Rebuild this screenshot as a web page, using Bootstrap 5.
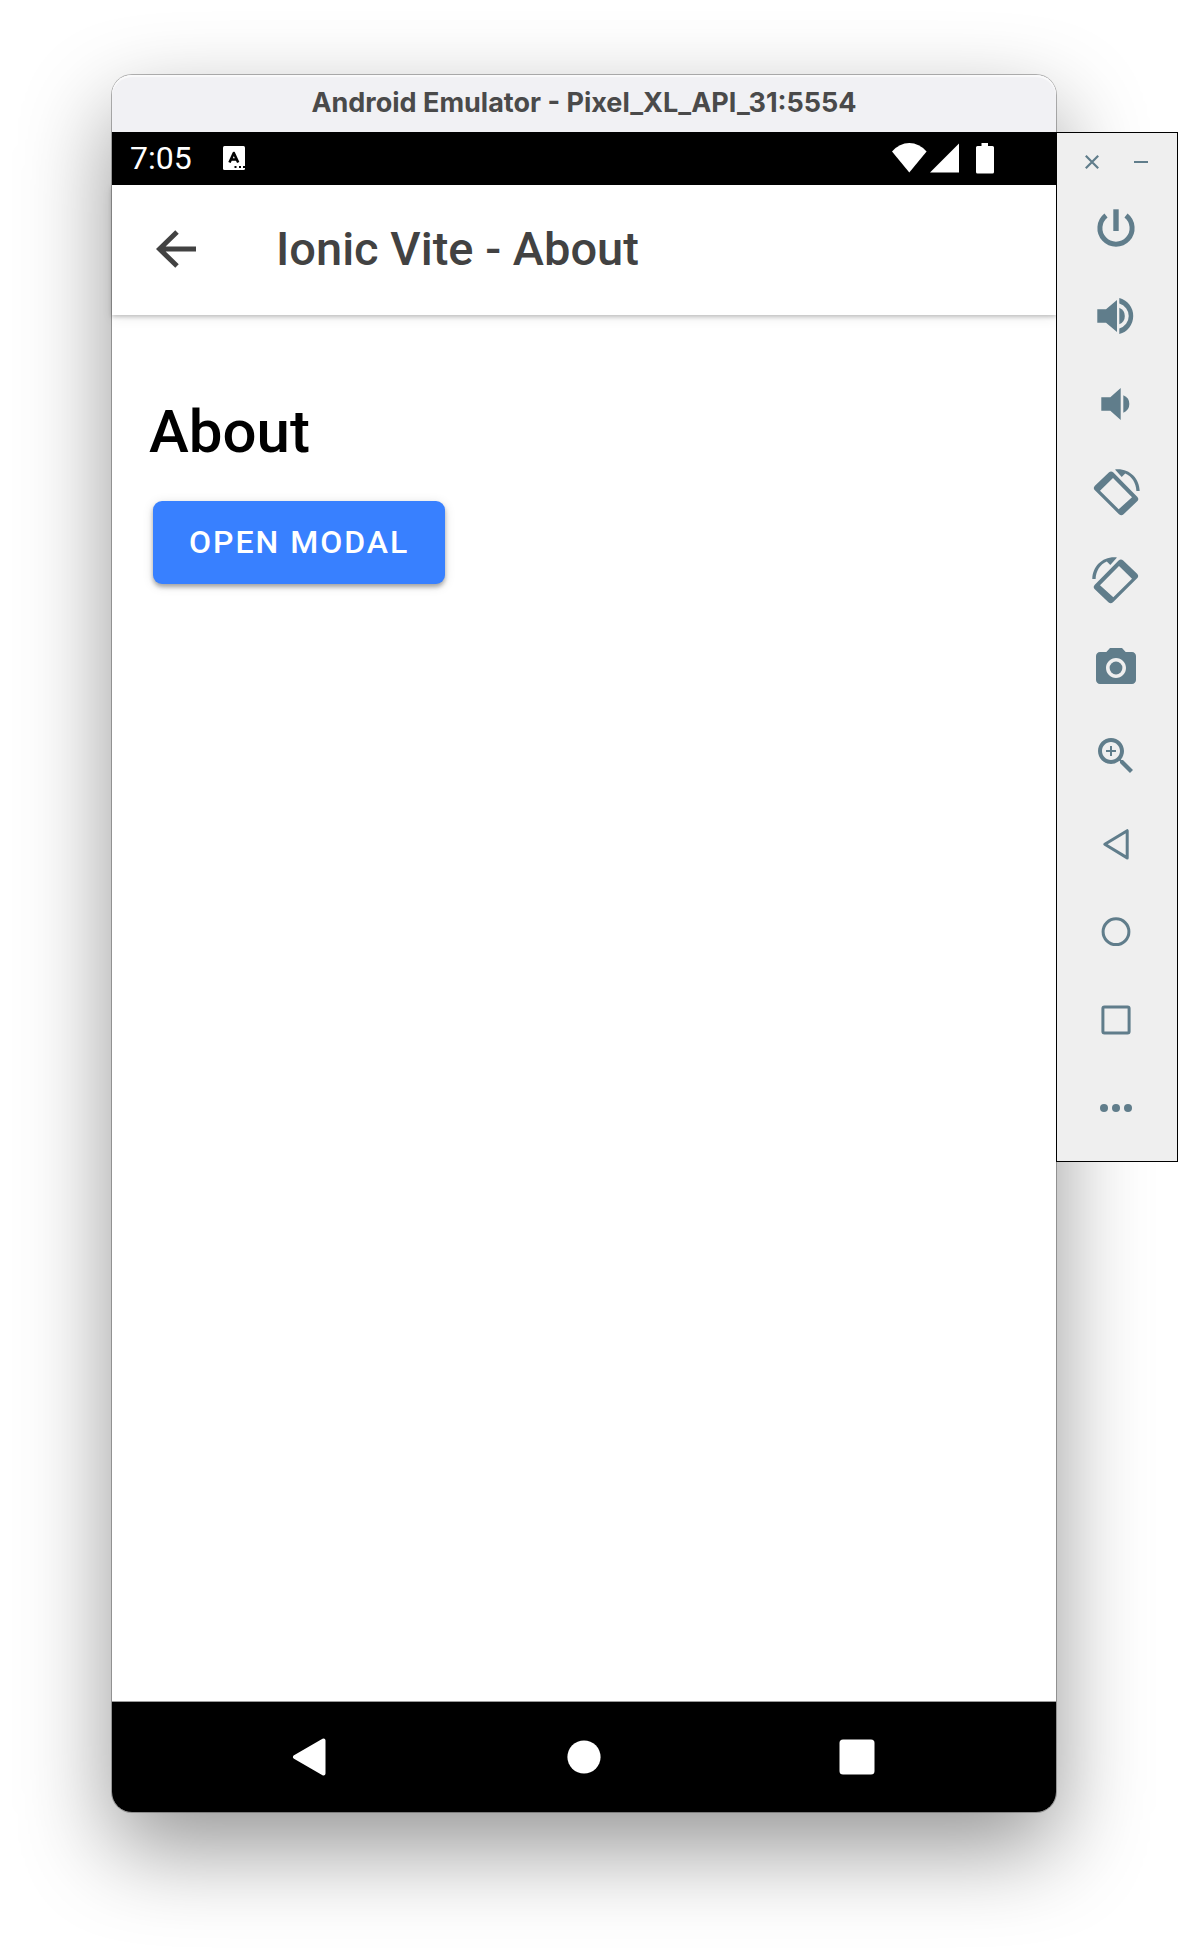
<!DOCTYPE html>
<html lang="en">
<head>
<meta charset="utf-8">
<meta name="viewport" content="width=device-width, initial-scale=1">
<title>Android Emulator - Pixel_XL_API_31:5554</title>
<link rel="stylesheet" href="https://cdn.jsdelivr.net/npm/bootstrap@5.3.0/dist/css/bootstrap.min.css">
<style>
  body { background: #fff; font-family: Roboto, sans-serif; }
  .desktop { padding: 75px 0 148px 112px; }
  .emulator {
    min-width: 0;
    border-radius: 20px;
    box-shadow: 0 0 0 1px rgba(0, 0, 0, .28), 0 36px 90px rgba(0, 0, 0, .42);
  }
  .title-bar {
    height: 57px;
    padding-bottom: 2px;
    border-radius: 20px 20px 0 0;
    background: #f1f1f4;
    box-shadow: inset 0 2px 1px #fafafb;
    color: #4a4a4a;
    font: 700 27px/32px Inter, sans-serif;
  }
  .status-bar { height: 53px; padding: 0 62px 2px 18px; gap: 30px; font-size: 32px; line-height: 40px; }
  .app-bar {
    height: 130px;
    padding: 0 0 2px 24px;
    gap: 60px;
    color: #424242;
    box-shadow: 0 2px 4px rgba(0, 0, 0, .22), 0 4px 12px rgba(0, 0, 0, .06);
  }
  .app-title { font-size: 47px; line-height: 56px; font-weight: 500; }
  .plain-btn { padding: 0; border: 0; background: none; color: inherit; display: flex; align-items: center; justify-content: center; }
  .back-btn { width: 80px; height: 80px; }
  .app-body { padding: 81px 37px; }
  .page-heading { font-size: 60px; line-height: 72px; font-weight: 500; color: #000; margin-bottom: 33px; }
  .open-btn {
    --bs-btn-bg: #3880ff;
    --bs-btn-color: #fff;
    --bs-btn-hover-bg: #4c8dff;
    --bs-btn-hover-color: #fff;
    --bs-btn-border-width: 0;
    --bs-btn-border-radius: 9px;
    --bs-btn-padding-x: 36px;
    --bs-btn-padding-y: 21px;
    --bs-btn-font-size: 32px;
    --bs-btn-font-weight: 500;
    --bs-btn-line-height: 41px;
    letter-spacing: 2px;
    margin-left: 4px;
    box-shadow: 0 3px 4px rgba(0, 0, 0, .3), 0 2px 12px rgba(0, 0, 0, .12);
  }
  .open-btn { line-height: 41px; }
  .nav-keys { height: 110px; border-radius: 0 0 20px 20px; box-shadow: 0 -1px 0 #9a9a9a; }
  .nav-keys .plain-btn { width: 148px; height: 80px; }
  .control-panel {
    width: 122px;
    margin-top: 57px;
    padding: 0 2px 9px 0;
    background: #efefef;
    border: 1px solid #000;
    color: #607d8b;
    z-index: 1;
  }
  .panel-head { height: 51px; padding: 8px 9px 0 10px; }
  .panel-head .plain-btn { width: 50px; height: 42px; }
  .panel-btn { height: 88px; }
</style>
</head>
<body>
<div class="desktop d-flex min-vh-100 overflow-hidden">
  <main class="emulator d-flex flex-column flex-grow-1 bg-white">
    <header class="title-bar d-flex align-items-center justify-content-center text-nowrap">Android Emulator - Pixel_XL_API_31:5554</header>

    <div class="status-bar d-flex align-items-center bg-black text-white">
      <span>7:05</span>
      <svg width="24" height="24" viewBox="0 0 24 24" aria-hidden="true">
        <rect x="1" width="22" height="24" rx="1.500" fill="#fff"/>
        <path d="M7.500 16.500 11.800 7 16.200 16.500M9 13.500h5.600" fill="none" stroke="#000" stroke-width="2.600" stroke-linejoin="round"/>
        <path d="M12.500 20h2v2h-2zM17 20h2v2h-2zM21 20h2v2h-2z"/>
      </svg>
      <svg class="ms-auto" width="102" height="32" viewBox="0 0 102 32" fill="#fff" aria-hidden="true">
        <path d="M0 9.500Q7.500 1 17.300 1T34.600 9.500L17.300 30.500z"/>
        <path d="M38 30.500 67 1.500v29z"/>
        <path d="M89.500 1h6.500v3h4.500a1.500 1.500 0 0 1 1.500 1.500V30a1.500 1.500 0 0 1-1.500 1.500H85.500A1.500 1.500 0 0 1 84 30V5.500A1.500 1.500 0 0 1 85.500 4h4z"/>
      </svg>
    </div>

    <div class="app-bar d-flex align-items-center">
      <button class="plain-btn back-btn" type="button" aria-label="Back">
        <svg width="40" height="38" viewBox="0 0 40 38" fill="none" stroke="currentColor" stroke-width="5"><path d="M21 2 3.500 19 21 36M3.500 19H40"/></svg>
      </button>
      <div class="app-title text-nowrap">Ionic Vite - About</div>
    </div>

    <section class="app-body flex-grow-1">
      <h1 class="page-heading">About</h1>
      <button class="btn open-btn text-uppercase" type="button">Open Modal</button>
    </section>

    <nav class="nav-keys d-flex align-items-center justify-content-evenly bg-black text-white">
      <button class="plain-btn" type="button" aria-label="Back">
        <svg width="38" height="38" viewBox="0 0 38 38" fill="currentColor" stroke="currentColor" stroke-width="4" stroke-linejoin="round"><path d="M3 19 31.500 2.500v33z"/></svg>
      </button>
      <button class="plain-btn" type="button" aria-label="Home">
        <svg width="34" height="34" viewBox="0 0 34 34" fill="currentColor"><circle cx="17" cy="17" r="16.600"/></svg>
      </button>
      <button class="plain-btn" type="button" aria-label="Overview">
        <svg width="36" height="36" viewBox="0 0 36 36" fill="currentColor"><rect x=".5" y=".5" width="35" height="35" rx="3.500"/></svg>
      </button>
    </nav>
  </main>

  <aside class="control-panel d-flex flex-column flex-shrink-0 align-self-start">
    <div class="panel-head d-flex justify-content-between">
      <button class="plain-btn" type="button" aria-label="Close">
        <svg width="14" height="14" viewBox="0 0 14 14" stroke="currentColor" stroke-width="2.200"><path d="m.8.8 12.400 12.400M13.200.8.8 13.200"/></svg>
      </button>
      <button class="plain-btn" type="button" aria-label="Minimize">
        <svg width="14" height="14" viewBox="0 0 14 14" stroke="currentColor" stroke-width="2"><path d="M0 7h14"/></svg>
      </button>
    </div>
    <button class="plain-btn panel-btn" type="button" aria-label="Power">
      <svg width="60" height="60" viewBox="0 0 60 60" fill="none" stroke="currentColor" stroke-width="5"><path d="M20 17.500a16.100 16.100 0 1 0 20 0"/><path d="M30 11.300V33" stroke-width="5.400"/></svg>
    </button>
    <button class="plain-btn panel-btn" type="button" aria-label="Volume up">
      <svg width="60" height="60" viewBox="0 0 60 60" fill="currentColor"><path d="M11.300 23.300H20L31 14v32l-11-9.300h-8.700z"/><path d="M33.300 21.700a9 9 0 0 1 0 16.600z"/><path d="M33.300 12a18.600 18.600 0 0 1 0 36v-5.500a13 13 0 0 0 0-25z"/></svg>
    </button>
    <button class="plain-btn panel-btn" type="button" aria-label="Volume down">
      <svg width="60" height="60" viewBox="0 0 60 60" fill="currentColor"><path d="M15.300 23.300h9L34.700 14v32l-10.400-9.300h-9z"/><path d="M37.300 21.300a9.300 9.300 0 0 1 0 17.400z"/></svg>
    </button>
    <button class="plain-btn panel-btn" type="button" aria-label="Rotate left">
      <svg width="60" height="60" viewBox="0 0 60 60" fill="currentColor"><path fill-rule="evenodd" d="M8.900 23.700 22.800 10.500a3.300 3.300 0 0 1 4.600 0L51.200 34.700a3.300 3.300 0 0 1 0 4.600L37.600 52.200a3.300 3.300 0 0 1-4.600 0L8.900 28.300a3.300 3.300 0 0 1 0-4.600zM14 28.700l18.700 18.600L46 35.300 27 16z"/><path d="M29 7.500C43 6 53.500 16 53.700 29h-3.300C50 21 46 14.500 39.200 11.600L35.700 14.900z"/></svg>
    </button>
    <button class="plain-btn panel-btn" type="button" aria-label="Rotate right">
      <svg width="60" height="60" viewBox="0 0 60 60" fill="currentColor"><g transform="matrix(-1 0 0 1 60 0)"><path fill-rule="evenodd" d="M8.900 23.700 22.800 10.500a3.300 3.300 0 0 1 4.600 0L51.200 34.700a3.300 3.300 0 0 1 0 4.600L37.600 52.200a3.300 3.300 0 0 1-4.600 0L8.900 28.300a3.300 3.300 0 0 1 0-4.600zM14 28.700l18.700 18.600L46 35.300 27 16z"/><path d="M29 7.500C43 6 53.500 16 53.700 29h-3.300C50 21 46 14.500 39.200 11.600L35.700 14.900z"/></g></svg>
    </button>
    <button class="plain-btn panel-btn" type="button" aria-label="Take screenshot">
      <svg width="48" height="48" viewBox="0 0 24 24" fill="currentColor"><circle cx="12" cy="12" r="3.200"/><path d="M9 2 7.170 4H4c-1.100 0-2 .9-2 2v12c0 1.100.9 2 2 2h16c1.100 0 2-.9 2-2V6c0-1.100-.9-2-2-2h-3.170L15 2H9zm3 15c-2.760 0-5-2.240-5-5s2.240-5 5-5 5 2.240 5 5-2.240 5-5 5z"/></svg>
    </button>
    <button class="plain-btn panel-btn" type="button" aria-label="Zoom mode">
      <svg width="48" height="48" viewBox="0 0 24 24" fill="currentColor"><path d="M15.500 14h-.79l-.28-.27C15.410 12.590 16 11.110 16 9.500 16 5.910 13.090 3 9.500 3S3 5.910 3 9.500 5.910 16 9.500 16c1.610 0 3.090-.59 4.230-1.570l.27.28v.79l5 4.990L20.490 19l-4.990-5zm-6 0C7.010 14 5 11.990 5 9.500S7.010 5 9.500 5 14 7.010 14 9.500 11.990 14 9.500 14z"/><path d="M12 10h-2v2H9v-2H7V9h2V7h1v2h2v1z"/></svg>
    </button>
    <button class="plain-btn panel-btn" type="button" aria-label="Back">
      <svg width="60" height="60" viewBox="0 0 60 60" fill="none" stroke="currentColor" stroke-width="3" stroke-linejoin="round"><path d="M18.800 30.300 41.200 16.700v27.200z"/></svg>
    </button>
    <button class="plain-btn panel-btn" type="button" aria-label="Home">
      <svg width="60" height="60" viewBox="0 0 60 60" fill="none" stroke="currentColor" stroke-width="3"><circle cx="30" cy="29.700" r="12.900"/></svg>
    </button>
    <button class="plain-btn panel-btn" type="button" aria-label="Overview">
      <svg width="60" height="60" viewBox="0 0 60 60" fill="none" stroke="currentColor" stroke-width="3"><rect x="16.900" y="16.900" width="26.200" height="26.200" rx="1.500"/></svg>
    </button>
    <button class="plain-btn panel-btn" type="button" aria-label="More">
      <svg width="60" height="60" viewBox="0 0 60 60" fill="currentColor"><circle cx="18" cy="30" r="4"/><circle cx="30" cy="30" r="4"/><circle cx="42" cy="30" r="4"/></svg>
    </button>
  </aside>
</div>
<script src="https://cdn.jsdelivr.net/npm/bootstrap@5.3.0/dist/js/bootstrap.bundle.min.js"></script>
</body>
</html>
